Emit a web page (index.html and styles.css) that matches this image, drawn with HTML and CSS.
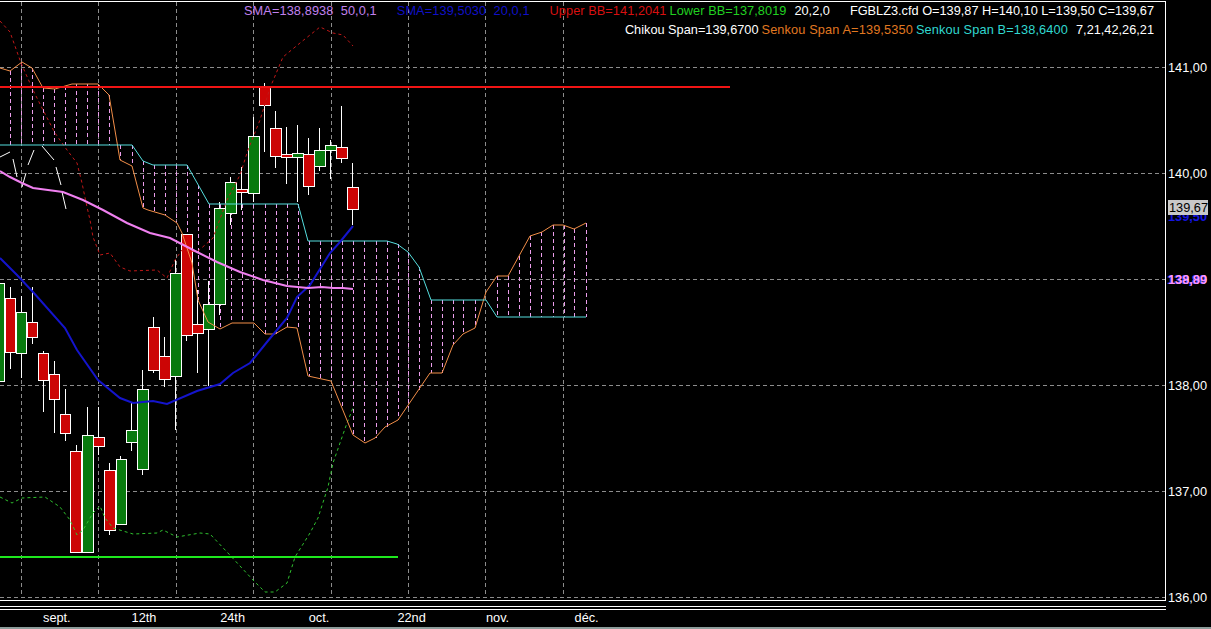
FILE: index.html
```html
<!DOCTYPE html>
<html lang="fr">
<head>
<meta charset="utf-8">
<title>FGBLZ3.cfd</title>
<link rel="stylesheet" href="styles.css">
</head>
<body>
<div class="app">
  <div class="main">
    <div class="plot">
      <svg class="chart" width="1165" height="598" viewBox="0 2 1165 598">
        <!-- grid -->
        <path class="grid" d="M0 67.5H1166M0 173.5H1166M0 279.5H1166M0 385.5H1166M0 491.5H1166M0 597.5H1166M21.5 2V598M98.5 2V598M176.5 2V598M253.5 2V598M331.5 2V598M408.5 2V598M485.5 2V598M563.5 2V598"/>
        <!-- cloud hatching -->
        <path class="hatch" d="M10.5 71V145M21.5 62V145M32.5 68V145M43.5 88V145M54.5 89V145M65.5 86V145M76.5 84V145M87.5 84V145M98.5 84V145M109.5 95V145M120.5 145V160M132.5 145V166M143.5 161V208M154.5 165V211M165.5 165V215M176.5 165V222M187.5 165V248M198.5 185V300M209.5 204V322M220.5 204V329M231.5 204V323M242.5 204V323M253.5 204V323M265.5 204V334M276.5 204V334M287.5 204V327M298.5 204V328M309.5 241V376M320.5 241V379M331.5 241V381M342.5 241V408M353.5 241V435M364.5 241V443M376.5 241V438M387.5 241V427M398.5 244V420M408.5 252V408M419.5 267V392M431.5 300V373M442.5 300V373M453.5 300V345M463.5 300V334M475.5 300V328M497.5 276V317M508.5 276V317M519.5 256V317M530.5 236V317M541.5 232V317M553.5 225V317M564.5 225V317M574.5 229V317M586.5 223V317"/>
        <!-- wicks -->
        <path class="wick" d="M10.5 287V369M21.5 296V378M32.5 287V344M43.5 351V412M54.5 361V433M65.5 389V441M76.5 445V552M87.5 407V552M98.5 407V455M109.5 463V535M120.5 456V524M131.5 403V451M142.5 370V475M153.5 317V373M164.5 337V387M175.5 260V430M186.5 234V341M197.5 290V373M208.5 281V386M219.5 202V315M230.5 177V225M241.5 167V210M253.5 117V202M264.5 83V152M275.5 111V168M286.5 127V184M297.5 125V202M308.5 138V195M319.5 128V171M330.5 140V179M341.5 106V163M352.5 163V225"/>
        <!-- candle bodies -->
        <g class="up">
          <rect x="-5.5" y="283.5" width="10" height="98"/>
          <rect x="16.5" y="312.5" width="10" height="41"/>
          <rect x="82.5" y="435.5" width="11" height="117"/>
          <rect x="116.5" y="459.5" width="10" height="65"/>
          <rect x="126.5" y="430.5" width="11" height="12"/>
          <rect x="137.5" y="389.5" width="11" height="80"/>
          <rect x="170.5" y="273.5" width="11" height="103"/>
          <rect x="203.5" y="304.5" width="11" height="25"/>
          <rect x="214.5" y="208.5" width="11" height="96"/>
          <rect x="225.5" y="182.5" width="11" height="31"/>
          <rect x="248.5" y="136.5" width="11" height="57"/>
          <rect x="292.5" y="153.5" width="11" height="4"/>
          <rect x="314.5" y="150.5" width="11" height="16"/>
          <rect x="325.5" y="145.5" width="11" height="5"/>
        </g>
        <g class="down">
          <rect x="5.5" y="298.5" width="10" height="54"/>
          <rect x="27.5" y="322.5" width="10" height="15"/>
          <rect x="38.5" y="353.5" width="10" height="27"/>
          <rect x="49.5" y="374.5" width="10" height="25"/>
          <rect x="60.5" y="414.5" width="10" height="19"/>
          <rect x="70.5" y="451.5" width="11" height="101"/>
          <rect x="93.5" y="437.5" width="11" height="9"/>
          <rect x="104.5" y="470.5" width="11" height="60"/>
          <rect x="148.5" y="327.5" width="11" height="43"/>
          <rect x="159.5" y="356.5" width="11" height="23"/>
          <rect x="181.5" y="234.5" width="11" height="101"/>
          <rect x="192.5" y="324.5" width="11" height="9"/>
          <rect x="236.5" y="189.5" width="11" height="3"/>
          <rect x="259.5" y="87.5" width="11" height="18"/>
          <rect x="270.5" y="128.5" width="11" height="28"/>
          <rect x="281.5" y="154.5" width="11" height="3"/>
          <rect x="303.5" y="154.5" width="11" height="32"/>
          <rect x="336.5" y="147.5" width="11" height="11"/>
          <rect x="347.5" y="187.5" width="11" height="22"/>
        </g>
        <!-- chikou span -->
        <path class="chikou" d="M0 157L10 152M13 159L17 177M26 173L22 187M28 165L34 150M42 146L54 160M56 167L61 185M62 192L66 209"/>
        <!-- bollinger bands -->
        <polyline class="bb-up" points="0,21 10,32 21,63 33,90 43,110 55,133 67,150 77,163 82,183 87,207 90,220 93,237 100,255 110,253 120,267 130,271 157,270 167,278 175,260 182,250 197,252 213,238 227,200 240,175 248,150 260,120 270,88 283,57 300,43 320,27 333,33 343,35 353,46"/>
        <polyline class="bb-low" points="0,497 12,503 22,498 45,497 60,507 70,520 77,535 83,530 93,513 100,506 105,518 113,528 133,534 157,533 163,530 177,537 200,533 210,534 227,552 253,580 265,592 275,592 287,583 295,557 310,533 318,518 328,487 333,463 347,423 353,408"/>
        <!-- senkou spans -->
        <polyline class="span-a" points="0,68 10,71 22,62 32,68 43,88 55,89 65,86 72,84 98,84 109,95 120,160 132,166 143,208 148,210 165,215 177,223 182,233 192,263 198,300 208,322 220,329 232,323 254,323 265,334 275,334 287,327 297,328 308,376 331,381 353,435 365,443 375,438 385,427 398,420 430,373 442,373 453,345 463,334 475,328 486,292 497,276 508,276 530,236 542,232 553,225 563,225 574,229 586,223"/>
        <polyline class="span-b" points="0,145 132,145 143,161 153,165 187,165 209,204 298,204 308,241 387,241 397,244 408,252 419,267 431,300 486,300 497,317 586,317"/>
        <!-- moving averages -->
        <polyline class="sma-blue" points="0,258 17,275 33,292 65,328 77,350 98,380 120,398 133,403 153,401 167,404 197,391 220,384 233,373 250,363 267,342 287,318 297,297 310,285 330,253 340,242 353,226"/>
        <polyline class="sma-pink" points="0,171 10,177 22,183 33,188 63,192 83,200 103,210 127,223 150,233 170,238 197,252 217,262 240,272 263,280 287,286 308,288 322,287 333,288 343,288 353,289"/>
        <!-- high and low levels -->
        <rect class="level-high" x="0" y="86" width="730" height="2"/>
        <rect class="level-low" x="0" y="556" width="398" height="2"/>
      </svg>
      <div class="legend">
        <div class="legend-row">
          <span class="c-violet gap-l">SMA=138,8938&nbsp;&nbsp;50,0,1</span>
          <span class="c-blue gap-l">SMA=139,5030&nbsp;&nbsp;20,0,1</span>
          <span class="c-red gap-s">Upper BB=141,2041</span>
          <span class="c-green gap-m">Lower BB=137,8019</span>
          <span class="c-white gap-l">20,2,0</span>
          <span class="c-white">FGBLZ3.cfd O=139,87 H=140,10 L=139,50 C=139,67</span>
        </div>
        <div class="legend-row">
          <span class="c-white gap-s">Chikou Span=139,6700</span>
          <span class="c-orange gap-s">Senkou Span A=139,5350</span>
          <span class="c-cyan gap-m">Senkou Span B=138,6400</span>
          <span class="c-white">7,21,42,26,21</span>
        </div>
      </div>
    </div>
    <div class="axis">
      <div class="tick">141,00</div>
      <div class="tick">140,00</div>
      <div class="tick tick-stack">139,00<span class="tag-blue-mid">138,80</span><span class="tag-pink">138,89</span></div>
      <div class="tick">138,00</div>
      <div class="tick">137,00</div>
      <div class="tick tick-end">136,00</div>
      <span class="tag-blue">139,50</span>
      <span class="tag-last">139,67</span>
    </div>
  </div>
  <div class="rules"></div>
  <div class="time-axis">
    <span class="date">sept.</span>
    <span class="date">12th</span>
    <span class="date">24th</span>
    <span class="date">oct.</span>
    <span class="date">22nd</span>
    <span class="date">nov.</span>
    <span class="date">déc.</span>
  </div>
</div>
</body>
</html>
```

FILE: styles.css
```css
html, body {
  margin: 0;
  padding: 0;
  height: 100%;
  background: #000;
  overflow: hidden;
}
body {
  font-family: "Liberation Sans", Arial, sans-serif;
  font-size: 12.75px;
  color: #fff;
}
.app {
  display: flex;
  flex-direction: column;
  height: 629px;
  overflow: hidden;
}
.main {
  display: flex;
  position: relative;
  height: 601px;
  flex: none;
}
.plot {
  position: relative;
  width: 1165px;
  border-top: 1px solid #fff;
  border-right: 1px solid #fff;
  border-bottom: 1px solid #fff;
  margin-top: 1px;
  overflow: hidden;
  flex: none;
}
.chart {
  display: block;
  fill: none;
}
.grid {
  stroke: #8c8c8c;
  stroke-width: 1;
  stroke-dasharray: 4 3;
}
.hatch {
  stroke: #ec9eec;
  stroke-width: 1;
  stroke-dasharray: 4 3;
}
.wick {
  stroke: #fff;
  stroke-width: 1;
}
.up rect {
  fill: #087a0e;
  stroke: #fff;
}
.down rect {
  fill: #cc0505;
  stroke: #fff;
}
.chikou {
  stroke: #fff;
  stroke-width: 1;
}
.bb-up {
  stroke: #c01818;
  stroke-width: 1;
  stroke-dasharray: 3 3;
}
.bb-low {
  stroke: #2fc02f;
  stroke-width: 1;
  stroke-dasharray: 3 3;
}
.span-a {
  stroke: #f28e48;
  stroke-width: 1;
}
.span-b {
  stroke: #55dede;
  stroke-width: 1;
}
.sma-blue {
  stroke: #1414cc;
  stroke-width: 2;
}
.sma-pink {
  stroke: #f080f0;
  stroke-width: 2;
}
.level-high {
  fill: #f01414;
}
.level-low {
  fill: #1ee81e;
}
.legend {
  position: absolute;
  top: -1px;
  right: 11px;
  line-height: 19px;
  white-space: nowrap;
}
.legend-row {
  display: flex;
  justify-content: flex-end;
}
.gap-l { margin-right: 20px; }
.gap-m { margin-right: 8px; }
.gap-s { margin-right: 3px; }
.c-violet { color: #c080ee; letter-spacing: 0.1px; }
.c-blue { color: #1010c8; letter-spacing: 0.1px; }
.c-red { color: #d81010; letter-spacing: 0.06px; }
.c-green { color: #20d020; letter-spacing: 0.06px; }
.c-white { color: #fff; }
.c-orange { color: #e07820; letter-spacing: 0.13px; }
.c-cyan { color: #30d8d0; letter-spacing: 0.13px; }
.axis {
  padding: 61px 0 0 2px;
  display: flex;
  flex-direction: column;
  width: 43px;
  height: 540px;
  flex: none;
}
.tick {
  height: 106px;
  line-height: 14px;
  position: relative;
  flex: none;
}
.tick-end {
  height: 14px;
}
.tag-last,
.tag-blue {
  position: absolute;
  left: 1168px;
  line-height: 15px;
}
.tag-last {
  top: 200px;
  padding: 0 1px;
  width: 38px;
  background: #c8c8c8;
  color: #000;
}
.tag-blue {
  top: 209px;
  color: #1414e0;
  font-weight: bold;
}
.tag-blue-mid,
.tag-pink {
  position: absolute;
  left: 0;
  top: 0;
  font-weight: bold;
}
.tag-blue-mid {
  color: #4040f0;
  left: -1px;
}
.tag-pink {
  color: #ff90ff;
}
.rules {
  height: 4px;
  flex: none;
  border-top: 1px solid #fff;
  border-bottom: 1px solid #fff;
  width: 1166px;
  box-sizing: border-box;
  margin-top: 5px;
}
.time-axis {
  display: flex;
  flex: none;
  box-sizing: border-box;
  padding-left: 43px;
  height: 19px;
  line-height: 16px;
  border-bottom: 2px solid #8c9c9a;
}
.date {
  width: 88.6px;
  flex: none;
}
```
